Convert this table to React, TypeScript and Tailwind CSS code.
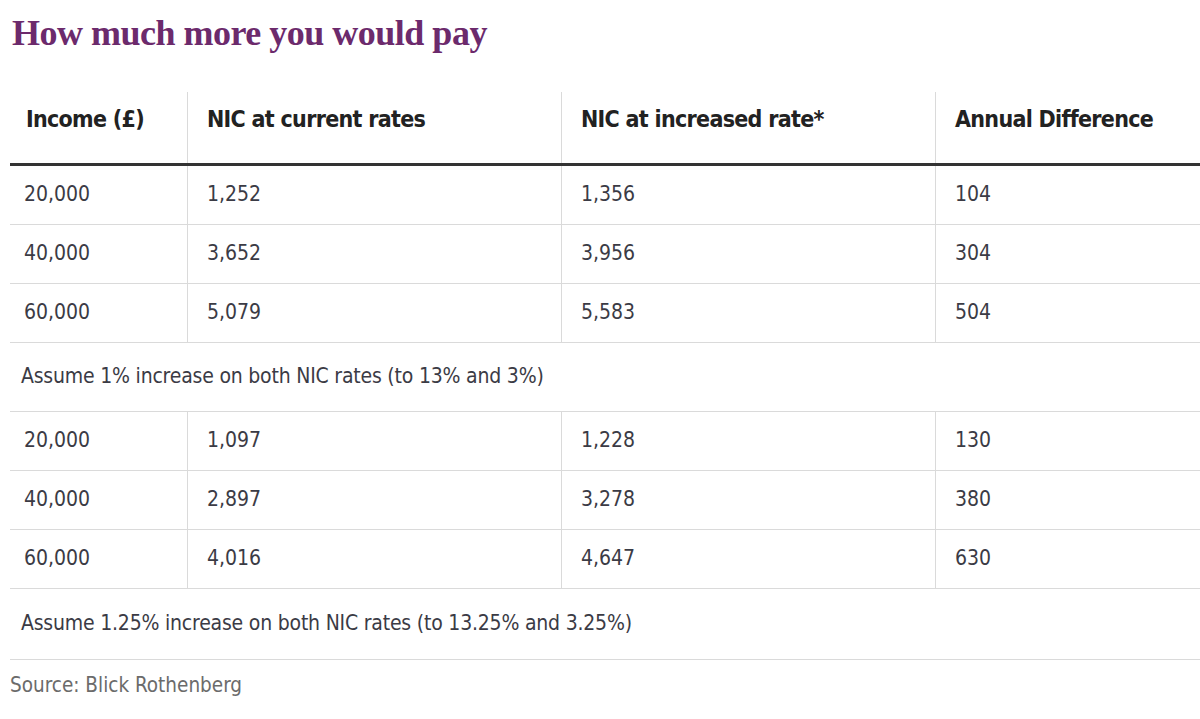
const rowsA = [
  ['20,000', '1,252', '1,356', '104'],
  ['40,000', '3,652', '3,956', '304'],
  ['60,000', '5,079', '5,583', '504'],
];

const rowsB = [
  ['20,000', '1,097', '1,228', '130'],
  ['40,000', '2,897', '3,278', '380'],
  ['60,000', '4,016', '4,647', '630'],
];

const headers = ['Income (£)', 'NIC at current rates', 'NIC at increased rate*', 'Annual Difference'];

const sans = "font-['DejaVu_Sans_Condensed','Liberation_Sans_Narrow','Liberation_Sans',sans-serif]";

function DataRow({ cells }: { cells: string[] }) {
  return (
    <div className="grid h-[59px] grid-cols-[177px_374px_374px_1fr] border-b border-[#dadada]">
      {cells.map((c, i) => (
        <div
          key={i}
          className={`flex items-center text-[21px] text-[#3b3b45] ${i === 0 ? 'pl-[14px]' : 'border-l border-[#dadada] pl-[19px]'}`}
        >
          {c}
        </div>
      ))}
    </div>
  );
}

function NoteRow({ text, height }: { text: string; height: string }) {
  return (
    <div className={`flex items-center border-b border-[#dadada] pl-[11px] text-[21px] tracking-[-0.2px] text-[#3b3b45] ${height}`}>
      {text}
    </div>
  );
}

export default function App() {
  return (
    <div className={`h-[719px] w-[1200px] overflow-hidden bg-white ${sans}`}>
      <h1 className="pl-[12px] pt-[10px] font-['Liberation_Serif',serif] text-[36px] font-bold leading-[46px] tracking-[-0.5px] text-[#6c2a6c]">
        How much more you would pay
      </h1>

      <div className="ml-[10px] mt-[36px]">
        {/* Header */}
        <div className="grid h-[74px] grid-cols-[177px_374px_374px_1fr] border-b-[3px] border-[#333333]">
          {headers.map((h, i) => (
            <div
              key={h}
              className={`flex items-center pb-[17px] text-[23px] font-bold tracking-[-0.7px] text-[#222222] ${i === 0 ? 'pl-[16px]' : 'border-l border-[#dadada] pl-[19px]'}`}
            >
              {h}
            </div>
          ))}
        </div>

        {rowsA.map((r) => (
          <DataRow key={r[0]} cells={r} />
        ))}
        <NoteRow text="Assume 1% increase on both NIC rates (to 13% and 3%)" height="h-[69px]" />

        {rowsB.map((r) => (
          <DataRow key={r[0]} cells={r} />
        ))}
        <NoteRow text="Assume 1.25% increase on both NIC rates (to 13.25% and 3.25%)" height="h-[71px]" />

        <p className="pt-[10px] text-[20.5px] text-[#6b6b6b]">Source: Blick Rothenberg</p>
      </div>
    </div>
  );
}
